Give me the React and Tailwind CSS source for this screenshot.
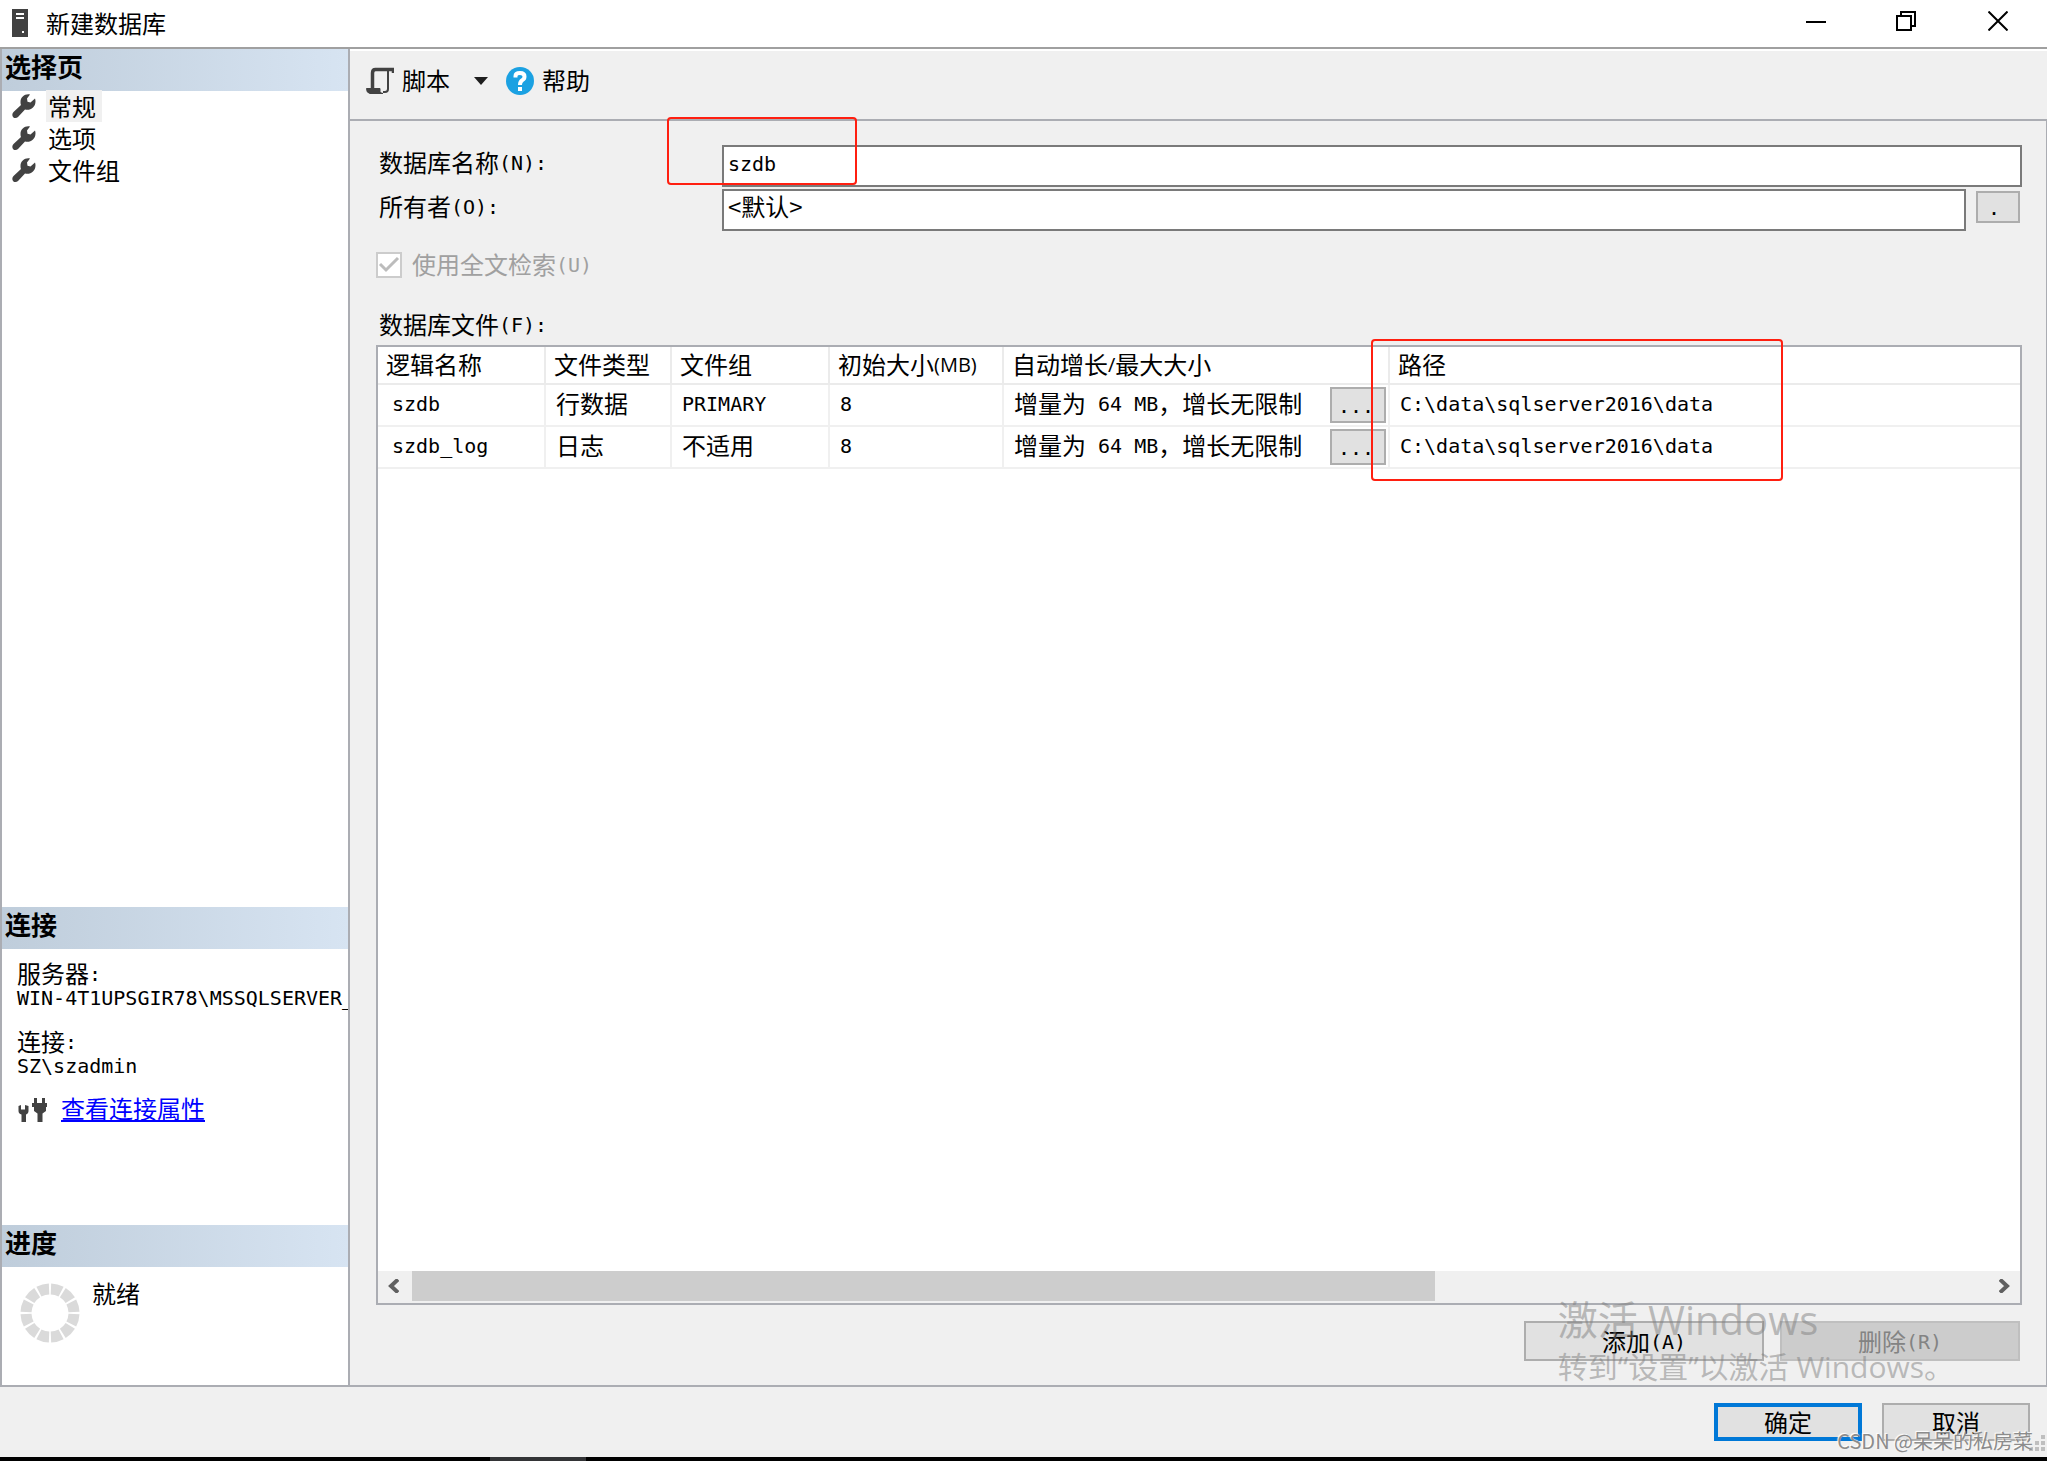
import { useState } from 'react';

const columns = [
  { label: '逻辑名称', width: 'w-[168px]' },
  { label: '文件类型', width: 'w-[126px]' },
  { label: '文件组', width: 'w-[158px]' },
  { label: '初始大小(MB)', width: 'w-[174px]' },
  { label: '自动增长/最大大小', width: 'w-[386px]' },
  { label: '路径', width: '' },
];

const files = [
  { name: 'szdb', type: '行数据', group: 'PRIMARY', size: '8', growth: '增量为 64 MB，增长无限制', path: 'C:\\data\\sqlserver2016\\data' },
  { name: 'szdb_log', type: '日志', group: '不适用', size: '8', growth: '增量为 64 MB，增长无限制', path: 'C:\\data\\sqlserver2016\\data' },
];

const pages = ['常规', '选项', '文件组'];

// Latin runs are set in the half-width monospaced face, Chinese runs in the full-width one
function T({ children, latin = "font-['DejaVu_Sans_Mono',monospace] text-[20px]" }) {
  return children.split(/([\x20-\x7e]+)/).filter(Boolean).map((part, i) => (
    /^[\x20-\x7e]+$/.test(part)
      ? <span key={i} className={`align-[2px] leading-0 whitespace-pre ${latin}`}>{part}</span>
      : <span key={i}>{part}</span>
  ));
}

function Wrench() {
  return (
    <svg width="24" height="26" viewBox="0 0 24 26" className="shrink-0" fill="#424242">
      <path d="M18 1.500C13 0.500 8.500 4 8.500 9 8.500 10.500 8.700 11.300 9 12L1.500 19C0 20.500 0 23 1.200 24.200 2.600 25.500 4.800 25.200 6 24L13 16.500C18 18 23.500 14.500 23.500 8.500 23.500 7.500 23.400 6.500 23 5.500L18.500 9.500 15.500 8.700 15 5.500Z" />
    </svg>
  );
}

function SectionTitle({ children }) {
  return (
    <h2 className="h-[42px] shrink-0 bg-linear-to-r from-[#bfcddb] to-[#d7e4f2] pl-[3px] text-[26px] leading-[34px] font-bold">
      {children}
    </h2>
  );
}

function PushButton({ children, className = '', ...props }) {
  return (
    <button className={`border-2 border-[#adadad] bg-[#e1e1e1] text-center ${className}`} {...props}>
      {children}
    </button>
  );
}

function TitleBar() {
  return (
    <header className="flex h-[49px] shrink-0 items-center border-b-2 border-[#a0a0a0] bg-white pb-0.5 pl-3">
      <svg width="16" height="28" viewBox="0 0 16 28" className="shrink-0">
        <rect width="16" height="28" fill="#424242" />
        <path d="M4 5h8M4 9h8" stroke="#fff" strokeWidth="2" />
        <rect x="10" y="22" width="2" height="2" fill="#fff" />
      </svg>
      <h1 className="ml-[18px] flex-1 text-[24px] leading-8">新建数据库</h1>
      <div className="flex pr-[39px] pb-1">
        <button aria-label="最小化" className="mr-[70px]">
          <svg width="20" height="20" viewBox="0 0 20 20"><path d="M0 11h20" stroke="#000" strokeWidth="2" /></svg>
        </button>
        <button aria-label="还原" className="mr-[72px]">
          <svg width="20" height="20" viewBox="0 0 20 20" fill="none" stroke="#000" strokeWidth="2">
            <path d="M1 5h14v14H1zM5 5V1h14v14h-4" />
          </svg>
        </button>
        <button aria-label="关闭">
          <svg width="20" height="20" viewBox="0 0 20 20"><path d="M0.5 0.5l19 19M19.5 0.5l-19 19" stroke="#000" strokeWidth="2" /></svg>
        </button>
      </div>
    </header>
  );
}

function Sidebar() {
  return (
    <aside className="flex w-[350px] shrink-0 flex-col border-x-2 border-[#abadb3] bg-white">
      <SectionTitle>选择页</SectionTitle>
      <ul className="flex-1">
        {pages.map((page, i) => (
          <li key={page} className="flex h-8 items-center pb-0.5 pl-2.5">
            <Wrench />
            <button className={`ml-2.5 h-8 pr-1.5 pl-0.5 leading-[30px] ${i === 0 ? 'bg-[#f0f0f0]' : ''}`}>{page}</button>
          </li>
        ))}
      </ul>

      <SectionTitle>连接</SectionTitle>
      <div className="h-[276px] shrink-0 overflow-hidden pt-3 pl-[15px] leading-6">
        <p><T>服务器:</T></p>
        <p className="whitespace-nowrap"><T>{'WIN-4T1UPSGIR78\\MSSQLSERVER_'}</T></p>
        <p className="mt-5"><T>连接:</T></p>
        <p><T>{'SZ\\szadmin'}</T></p>
        <div className="mt-4 flex items-center gap-3.5">
          <svg width="30" height="30" viewBox="0 0 30 30" fill="#424242">
            <path d="M1.500 13L4 12v4.500h4V12l3.500 1v5c0 2-1 3-2.500 3.500V29H4.500v-7.500C2.500 21 1.500 20 1.500 18z" />
            <path d="M17 5h3v5h5V5h3v5h2v4h-1v4l-3.500 2.500V29h-5v-8.500L17 18v-4h-2v-4h2z" />
          </svg>
          <a href="#connection" className="text-[#0000ff] underline decoration-2 underline-offset-2">查看连接属性</a>
        </div>
      </div>

      <SectionTitle>进度</SectionTitle>
      <div className="flex h-[118px] shrink-0 items-start pt-4 pl-[18px]">
        <svg width="60" height="60" viewBox="0 0 60 60" fill="none">
          <circle cx="30" cy="30" r="24" stroke="#dadada" strokeWidth="11" pathLength="120" strokeDasharray="8.400 1.600" strokeDashoffset="-0.800" />
        </svg>
        <p className="ml-3 leading-5">就绪</p>
      </div>
    </aside>
  );
}

function Toolbar() {
  return (
    <div className="mt-0.5 flex h-[70px] shrink-0 items-center border-b-2 border-[#abadb3] bg-[#f0f0f0] pb-2 pl-4">
      <button className="flex items-center">
        <svg width="28" height="28" viewBox="0 0 28 28" fill="none" stroke="#424242">
          <path d="M27.500 6V2.500H9.500Q6.500 2.500 6.500 6V22" strokeWidth="3.500" />
          <path d="M22 3v19q0 3-3 3h-2" strokeWidth="2" />
          <path d="M0.500 21.500H14v3q0.500 2 3 2H4Q0.500 26 0.500 21.500z" fill="#424242" strokeWidth="1" />
        </svg>
        <span className="ml-2 pb-0.5">脚本</span>
        <svg width="14" height="8" viewBox="0 0 14 8" className="ml-6"><path d="M0 0h14L7 8z" fill="#1e1e1e" /></svg>
      </button>
      <button className="ml-[18px] flex items-center">
        <svg width="28" height="28" viewBox="0 0 28 28">
          <circle cx="14" cy="14" r="14" fill="#1ba1e2" />
          <path d="M9.500 10.500V9Q9.500 6 14 6T18.500 9.500Q18.500 12 16.500 13 14 14.500 14 18" fill="none" stroke="#fff" strokeWidth="4" />
          <rect x="12" y="20" width="4" height="4" fill="#fff" />
        </svg>
        <span className="ml-2 pb-0.5">帮助</span>
      </button>
    </div>
  );
}

function Cell({ children, className = 'pb-1' }) {
  return (
    <td className={`h-[42px] border-r-2 border-b-2 border-[#f0f0f0] pl-2.5 leading-8 whitespace-nowrap last:border-r-0 ${className}`}>
      {children}
    </td>
  );
}

function FileGrid() {
  return (
    <div className="flex flex-1 flex-col border-2 border-[#abadb3] bg-white">
      <table className="w-full table-fixed border-separate border-spacing-0">
        <thead>
          <tr>
            {columns.map(({ label, width }) => (
              <th
                key={label}
                className={`h-[38px] border-r-2 border-b-2 border-[#ebebeb] pb-0.5 pl-2 text-left leading-8 font-normal whitespace-nowrap last:border-r-0 ${width}`}
              >
                <T latin="font-['Open_Sans',sans-serif] text-[20px]">{label}</T>
              </th>
            ))}
          </tr>
        </thead>
        <tbody>
          {files.map((file) => (
            <tr key={file.name}>
              <Cell><span className="pl-1"><T>{file.name}</T></span></Cell>
              <Cell><T>{file.type}</T></Cell>
              <Cell><T>{file.group}</T></Cell>
              <Cell><T>{file.size}</T></Cell>
              <Cell className="pr-0.5">
                <div className="flex items-center justify-between">
                  <span className="pb-1"><T>{file.growth}</T></span>
                  <PushButton aria-label="更改自动增长" className="h-9 w-14 pr-1"><T>...</T></PushButton>
                </div>
              </Cell>
              <Cell><T>{file.path}</T></Cell>
            </tr>
          ))}
        </tbody>
      </table>

      <div className="mt-auto flex h-8 shrink-0 bg-[#f0f0f0] pb-0.5">
        <button aria-label="向左滚动" className="flex w-[34px] items-center justify-center pr-1">
          <svg width="12" height="14" viewBox="0 0 12 14"><path d="M11 0.500L4 7l7 6.500" fill="none" stroke="#606060" strokeWidth="4" /></svg>
        </button>
        <div className="flex-1"><div className="h-full w-[65%] bg-[#cdcdcd]" /></div>
        <button aria-label="向右滚动" className="flex w-[34px] items-center justify-center pl-1">
          <svg width="12" height="14" viewBox="0 0 12 14"><path d="M1 0.500L8 7l-7 6.500" fill="none" stroke="#606060" strokeWidth="4" /></svg>
        </button>
      </div>
    </div>
  );
}

function GeneralPage() {
  const [name, setName] = useState('szdb');
  const [owner, setOwner] = useState('<默认>');

  return (
    <section className="relative flex flex-1 flex-col border-r border-[#abadb3] bg-[#f0f0f0] pt-6 pr-6 pb-6 pl-[26px]">
      <div className="flex h-[42px]">
        <label htmlFor="db-name" className="w-[346px] shrink-0 pl-[3px] leading-[34px]"><T>数据库名称(N):</T></label>
        <input
          id="db-name"
          value={name}
          onChange={(e) => setName(e.target.value)}
          className="min-w-0 flex-1 border-2 border-[#7a7a7a] bg-white px-1 pb-1 font-['DejaVu_Sans_Mono',monospace] text-[20px] outline-none"
        />
      </div>
      <div className="mt-0.5 flex h-[42px]">
        <label htmlFor="db-owner" className="w-[346px] shrink-0 pl-[3px] leading-[34px]"><T>所有者(O):</T></label>
        <input
          id="db-owner"
          value={owner}
          onChange={(e) => setOwner(e.target.value)}
          className="min-w-0 flex-1 border-2 border-[#7a7a7a] bg-white px-1 pb-2 outline-none"
        />
        <PushButton aria-label="浏览所有者" className="mt-0.5 mr-0.5 ml-2.5 h-8 w-11 pr-2 leading-7"><T>.</T></PushButton>
      </div>

      <label className="mt-[18px] flex h-8 items-center gap-2.5 text-[#a0a0a0]">
        <span className="relative size-[26px]">
          <input type="checkbox" checked disabled readOnly className="block size-[26px] appearance-none border-2 border-[#cccccc] bg-white" />
          <svg viewBox="0 0 26 26" className="pointer-events-none absolute inset-0" fill="none">
            <path d="M4 12l6 6L22 6" stroke="#bcbcbc" strokeWidth="3" />
          </svg>
        </span>
        <span className="pb-0.5"><T>使用全文检索(U)</T></span>
      </label>

      <p className="mt-7 mb-1 h-8 pl-[3px] leading-[30px]"><T>数据库文件(F):</T></p>
      <FileGrid />

      <div className="mt-4 flex justify-end gap-4 pr-0.5">
        <PushButton className="h-10 w-[240px]"><T>添加(A)</T></PushButton>
        <button disabled className="h-10 w-[240px] border-2 border-[#bfbfbf] bg-[#cccccc] text-[#838383]"><T>删除(R)</T></button>
      </div>

      {/* highlight frames over the name box and the path column */}
      <div className="pointer-events-none absolute -top-1 left-[317px] h-[68px] w-[190px] rounded-sm border-2 border-[#ff1f10]" />
      <div className="pointer-events-none absolute top-[218px] left-[1021px] h-[142px] w-[412px] rounded-sm border-2 border-[#ff1f10]" />

      {/* system activation notice */}
      <div className="pointer-events-none absolute right-[92px] bottom-0 font-['Open_Sans','Noto_Sans_CJK_SC',sans-serif] whitespace-nowrap text-[#808080]/50">
        <p className="text-[40px] leading-[58px]">激活 Windows</p>
        <p className="text-[30px] leading-9">转到“设置”以激活 Windows。</p>
      </div>
    </section>
  );
}

export default function App() {
  return (
    <div className="flex min-h-screen flex-col bg-[#f0f0f0] font-['Noto_Sans_CJK_SC',sans-serif] text-[24px] text-black">
      <TitleBar />
      <div className="flex flex-1 border-b-2 border-[#abadb3]">
        <Sidebar />
        <main className="flex min-w-0 flex-1 flex-col bg-white">
          <Toolbar />
          <GeneralPage />
        </main>
      </div>

      <footer className="relative flex h-[70px] shrink-0 justify-end gap-5 pt-4 pr-[17px]">
        <button className="h-[38px] w-[148px] border-4 border-[#0078d7] bg-[#e1e1e1] leading-[30px]">确定</button>
        <PushButton className="h-[38px] w-[148px] leading-[34px]">取消</PushButton>
        <svg width="16" height="16" viewBox="0 0 16 16" fill="#bfbfbf" className="absolute right-0.5 bottom-1.5">
          <path d="M12 0h4v4h-4zM6 6h4v4H6zM12 6h4v4h-4zM0 12h4v4H0zM6 12h4v4H6zM12 12h4v4h-4z" />
        </svg>
        <p className="absolute right-3.5 bottom-0.5 text-[20px] leading-7 text-[#8c8c8c] [text-shadow:-1px_-1px_1px_#ffffff]">CSDN @呆呆的私房菜</p>
      </footer>
      <div className="h-1 shrink-0 bg-black pl-[490px]"><div className="h-full w-24 bg-[#333436]" /></div>
    </div>
  );
}
